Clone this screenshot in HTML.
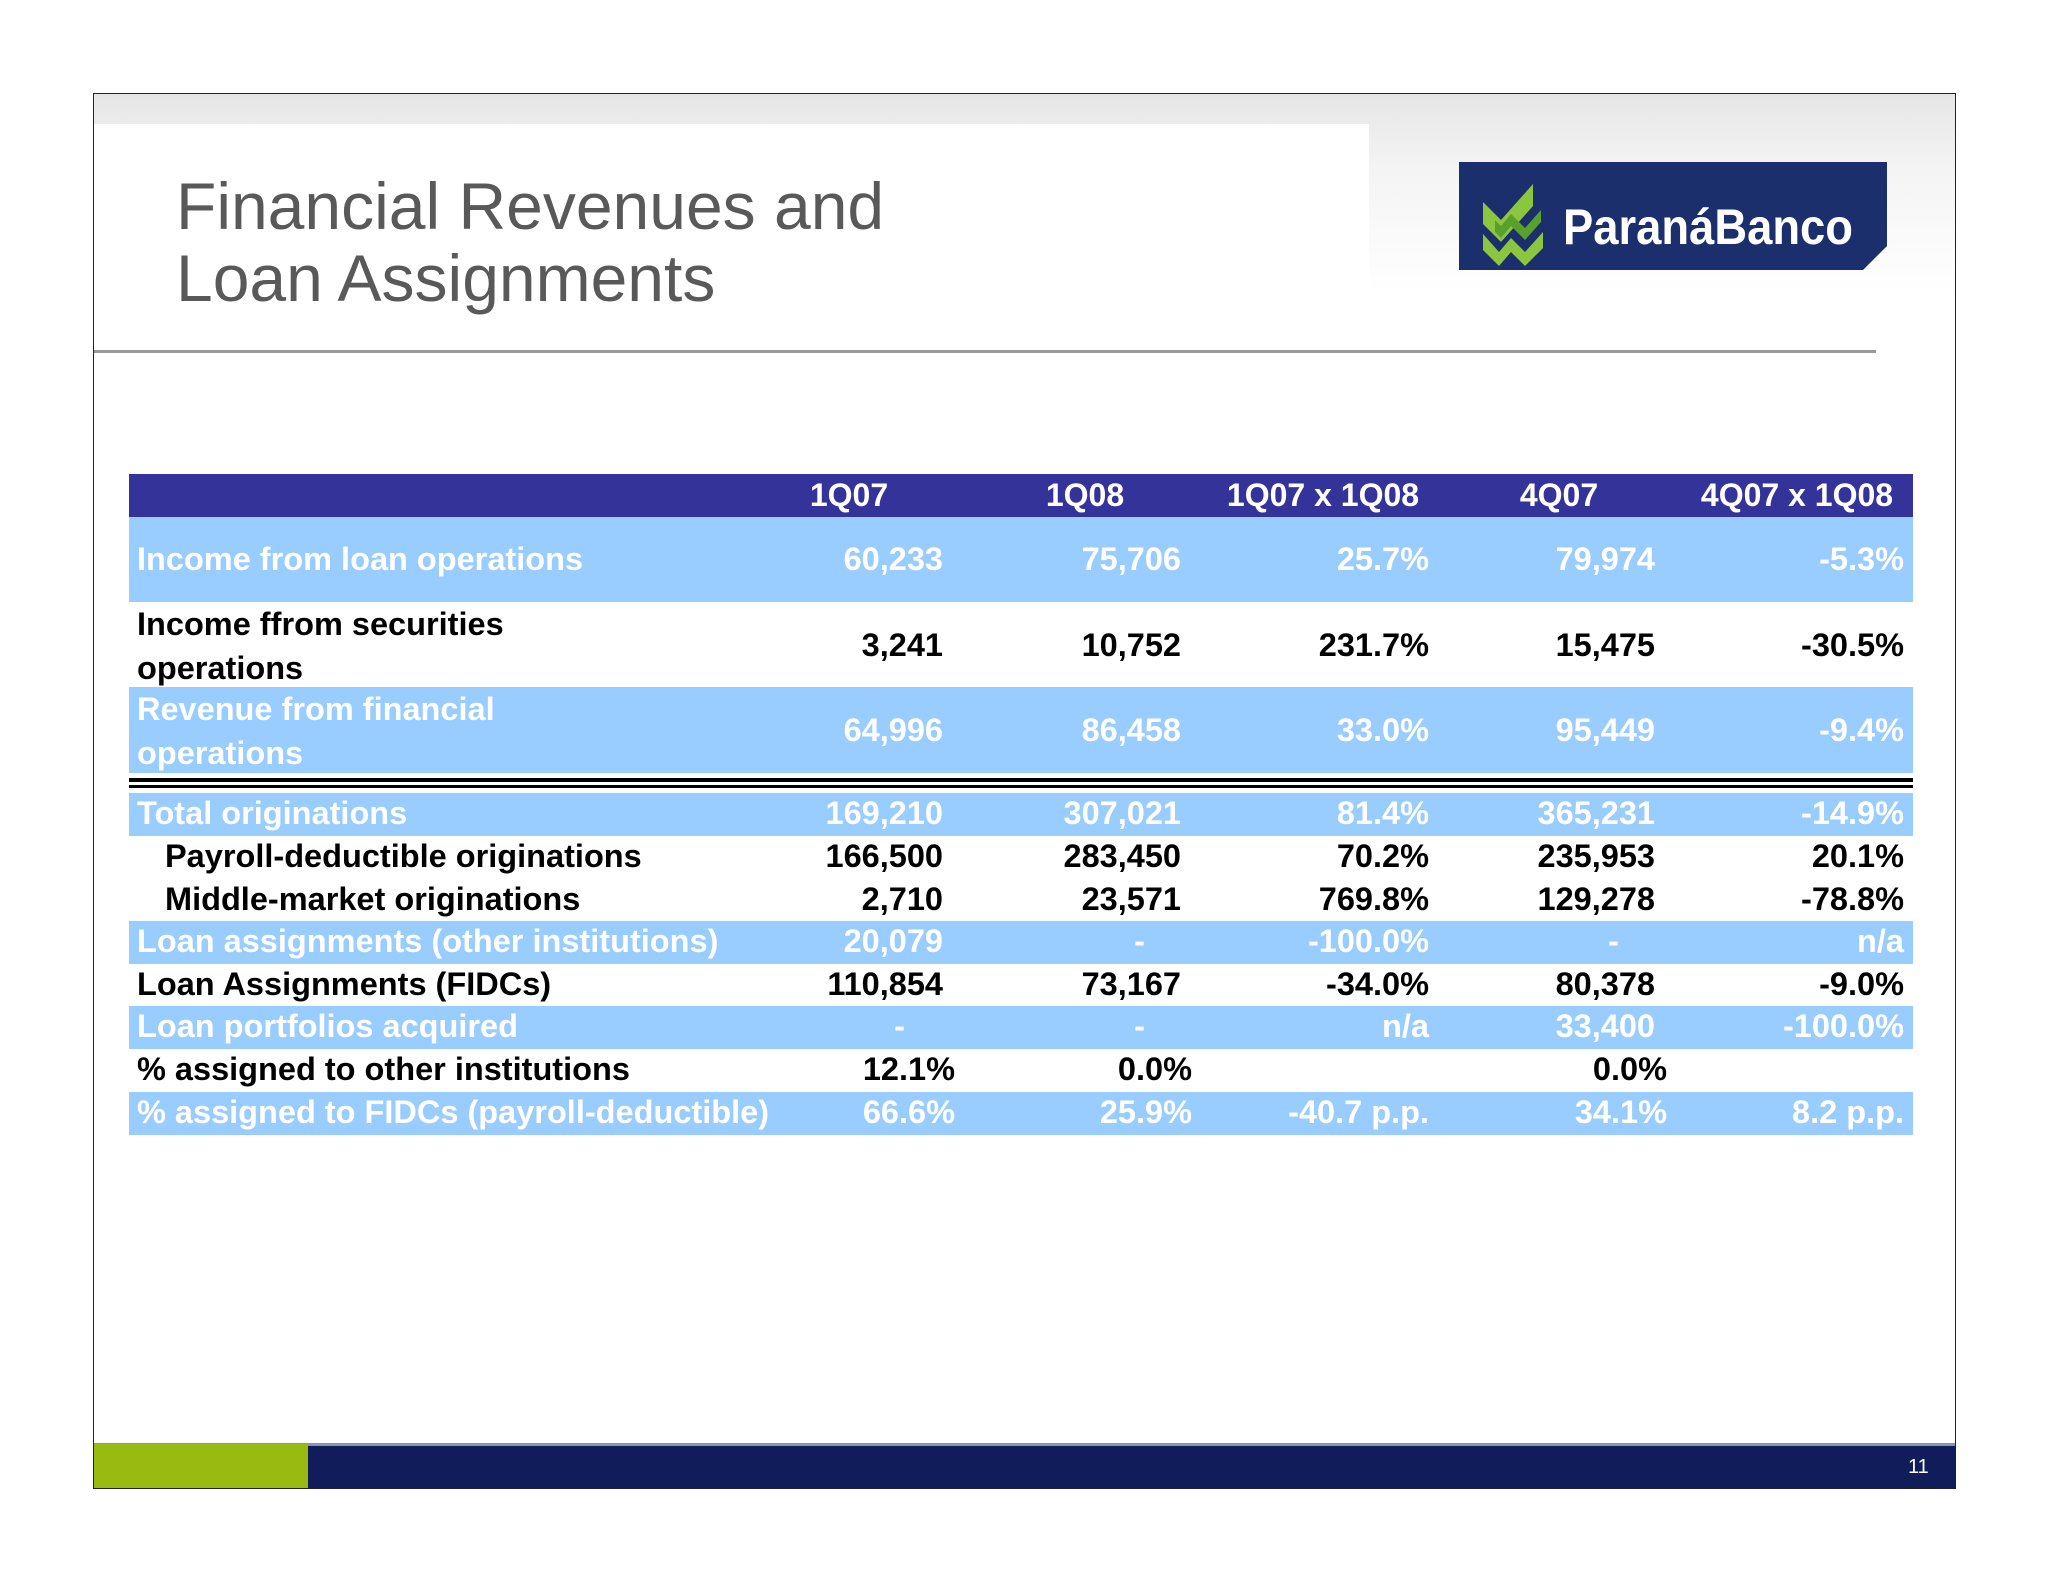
<!DOCTYPE html>
<html><head><meta charset="utf-8"><style>
*{margin:0;padding:0;box-sizing:border-box}
body{width:2048px;height:1582px;background:#fff;position:relative;overflow:hidden;font-family:"Liberation Sans",Arial,sans-serif}
.a{position:absolute}
.frame{left:93px;top:93px;width:1863px;height:1396px;border:1.5px solid #222;background:#fff}
.hdrgray{left:94px;top:94px;width:1861px;height:250px;background:linear-gradient(#e6e6e6,#f4f4f4 30%,#fff 80%)}
.hdrwhite{left:94px;top:124px;width:1275px;height:226px;background:#fff}
.title{left:176px;color:#595959;font-size:66px;line-height:72px;top:170px}
.rule{left:94px;top:350px;width:1782px;height:3px;background:#999}
.row{left:129px;width:1784px}
.blue{background:#99ccff;color:#fff}
.wh{background:#fff;color:#000}
.t{position:absolute;font-weight:bold;font-size:32.5px;white-space:nowrap}
.n{position:absolute;font-weight:bold;font-size:32.5px;white-space:nowrap;text-align:right}
.h{position:absolute;font-weight:bold;font-size:32px;white-space:nowrap;text-align:center;top:3px}
</style></head><body>
<div class="a frame"></div>
<div class="a hdrgray"></div>
<div class="a hdrwhite"></div>
<div class="a title">Financial Revenues and<br>Loan Assignments</div>
<div class="a rule"></div>

<!-- logo -->
<svg class="a" style="left:1459px;top:162px" width="430" height="110" viewBox="0 0 430 110">
<polygon points="0,0 428,0 428,84 404,108 0,108" fill="#1b2f6c"/>
<polygon points="24,40 42,58 74,22 74,44 42,80 24,62" fill="#8cc63f"/>
<polygon points="24,72 40,90 52,76 66,90 84,70 84,86 66,104 52,90 40,104 24,88" fill="#8cc63f"/>
<polygon points="36,58 42,64 52,52 66,66 82,48 82,60 66,78 52,64 42,76 36,70" fill="#5aa02c"/>
<text x="104" y="82" fill="#fff" font-family="Liberation Sans, sans-serif" font-weight="bold" font-size="50" textLength="290" lengthAdjust="spacingAndGlyphs">ParanáBanco</text>
</svg>

<!-- table header -->
<div class="a row" style="top:474px;height:43px;background:#333399;color:#fff">
<div class="h" style="left:620px;width:200px">1Q07</div>
<div class="h" style="left:856px;width:200px">1Q08</div>
<div class="h" style="left:1084px;width:220px">1Q07 x 1Q08</div>
<div class="h" style="left:1330px;width:200px">4Q07</div>
<div class="h" style="left:1558px;width:220px">4Q07 x 1Q08</div>
</div>

<!-- rows -->
<div class="a row blue" style="top:517px;height:85px">
<div class="t" style="left:8px;top:24px">Income from loan operations</div>
<div class="n" style="right:970px;top:24px">60,233</div><div class="n" style="right:732px;top:24px">75,706</div><div class="n" style="right:484px;top:24px">25.7%</div><div class="n" style="right:258px;top:24px">79,974</div><div class="n" style="right:9px;top:24px">-5.3%</div>
</div>
<div class="a row wh" style="top:602px;height:85px">
<div class="t" style="left:8px;top:0px;line-height:44px">Income ffrom securities<br>operations</div>
<div class="n" style="right:970px;top:25px">3,241</div><div class="n" style="right:732px;top:25px">10,752</div><div class="n" style="right:484px;top:25px">231.7%</div><div class="n" style="right:258px;top:25px">15,475</div><div class="n" style="right:9px;top:25px">-30.5%</div>
</div>
<div class="a row blue" style="top:687px;height:86px">
<div class="t" style="left:8px;top:0px;line-height:44px">Revenue from financial<br>operations</div>
<div class="n" style="right:970px;top:25px">64,996</div><div class="n" style="right:732px;top:25px">86,458</div><div class="n" style="right:484px;top:25px">33.0%</div><div class="n" style="right:258px;top:25px">95,449</div><div class="n" style="right:9px;top:25px">-9.4%</div>
</div>
<div class="a row" style="top:778px;height:4px;background:#000"></div>
<div class="a row" style="top:785px;height:3px;background:#000"></div>

<div class="a row blue" style="top:793px;height:43px"><div class="t" style="left:8px;top:2px">Total originations</div>
<div class="n" style="right:970px;top:2px">169,210</div><div class="n" style="right:732px;top:2px">307,021</div><div class="n" style="right:484px;top:2px">81.4%</div><div class="n" style="right:258px;top:2px">365,231</div><div class="n" style="right:9px;top:2px">-14.9%</div></div>
<div class="a row wh" style="top:836px;height:43px"><div class="t" style="left:36px;top:2px">Payroll-deductible originations</div>
<div class="n" style="right:970px;top:2px">166,500</div><div class="n" style="right:732px;top:2px">283,450</div><div class="n" style="right:484px;top:2px">70.2%</div><div class="n" style="right:258px;top:2px">235,953</div><div class="n" style="right:9px;top:2px">20.1%</div></div>
<div class="a row wh" style="top:879px;height:42px"><div class="t" style="left:36px;top:2px">Middle-market originations</div>
<div class="n" style="right:970px;top:2px">2,710</div><div class="n" style="right:732px;top:2px">23,571</div><div class="n" style="right:484px;top:2px">769.8%</div><div class="n" style="right:258px;top:2px">129,278</div><div class="n" style="right:9px;top:2px">-78.8%</div></div>
<div class="a row blue" style="top:921px;height:43px"><div class="t" style="left:8px;top:2px">Loan assignments (other institutions)</div>
<div class="n" style="right:970px;top:2px">20,079</div><div class="n" style="right:768px;top:2px">-</div><div class="n" style="right:484px;top:2px">-100.0%</div><div class="n" style="right:294px;top:2px">-</div><div class="n" style="right:9px;top:2px">n/a</div></div>
<div class="a row wh" style="top:964px;height:42px"><div class="t" style="left:8px;top:2px">Loan Assignments (FIDCs)</div>
<div class="n" style="right:970px;top:2px">110,854</div><div class="n" style="right:732px;top:2px">73,167</div><div class="n" style="right:484px;top:2px">-34.0%</div><div class="n" style="right:258px;top:2px">80,378</div><div class="n" style="right:9px;top:2px">-9.0%</div></div>
<div class="a row blue" style="top:1006px;height:43px"><div class="t" style="left:8px;top:2px">Loan portfolios acquired</div>
<div class="n" style="right:1008px;top:2px">-</div><div class="n" style="right:768px;top:2px">-</div><div class="n" style="right:484px;top:2px">n/a</div><div class="n" style="right:258px;top:2px">33,400</div><div class="n" style="right:9px;top:2px">-100.0%</div></div>
<div class="a row wh" style="top:1049px;height:43px"><div class="t" style="left:8px;top:2px">% assigned to other institutions</div>
<div class="n" style="right:958px;top:2px">12.1%</div><div class="n" style="right:721px;top:2px">0.0%</div><div class="n" style="right:246px;top:2px">0.0%</div></div>
<div class="a row blue" style="top:1092px;height:43px"><div class="t" style="left:8px;top:2px">% assigned to FIDCs (payroll-deductible)</div>
<div class="n" style="right:958px;top:2px">66.6%</div><div class="n" style="right:721px;top:2px">25.9%</div><div class="n" style="right:484px;top:2px">-40.7 p.p.</div><div class="n" style="right:246px;top:2px">34.1%</div><div class="n" style="right:9px;top:2px">8.2 p.p.</div></div>

<!-- footer -->
<div class="a" style="left:94px;top:1443px;width:1861px;height:3px;background:#8a93b0"></div>
<div class="a" style="left:94px;top:1446px;width:1861px;height:42px;background:#111c5a"></div>
<div class="a" style="left:94px;top:1444px;width:214px;height:44px;background:#99bb11"></div>
<div class="a" style="left:1908px;top:1456px;color:#fff;font-size:20px">11</div>
</body></html>
